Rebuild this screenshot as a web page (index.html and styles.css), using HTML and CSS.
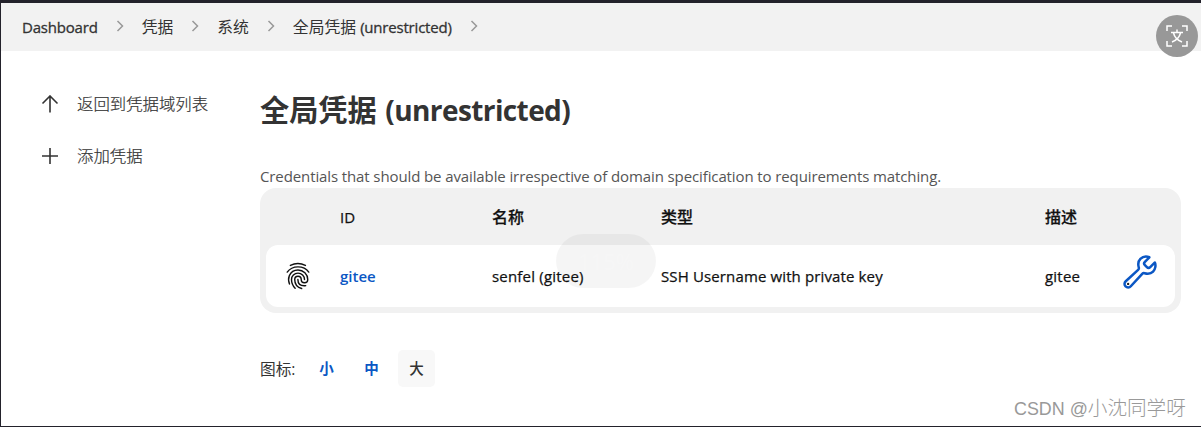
FILE: index.html
```html
<!DOCTYPE html>
<html lang="zh-CN">
  <head>
    <meta charset="UTF-8" />
    <title>全局凭据 (unrestricted)</title>
    <link rel="stylesheet" href="styles.css">
  </head>
  <body>
    <header class="breadcrumbs">
      <a class="crumb crumb-home">Dashboard</a>
      <svg class="chevron" viewBox="0 0 8 12"><path d="M1.5 1l5 5-5 5" /></svg>
      <a class="crumb">凭据</a>
      <svg class="chevron" viewBox="0 0 8 12"><path d="M1.5 1l5 5-5 5" /></svg>
      <a class="crumb">系统</a>
      <svg class="chevron" viewBox="0 0 8 12"><path d="M1.5 1l5 5-5 5" /></svg>
      <a class="crumb">全局凭据 <span class="crumb-latin">(unrestricted)</span></a>
      <svg class="chevron" viewBox="0 0 8 12"><path d="M1.5 1l5 5-5 5" /></svg>
    </header>

    <div class="page">
      <nav class="side-panel">
        <a class="task">
          <svg class="task-icon" viewBox="0 0 18 18"><path d="M1.5 8.5L9 1l7.500 7.500M9 1v16.500" /></svg>
          <span class="task-text">返回到凭据域列表</span>
        </a>
        <a class="task">
          <svg class="task-icon" viewBox="0 0 18 18"><path d="M9 1v16M1 9h16" /></svg>
          <span class="task-text">添加凭据</span>
        </a>
      </nav>

      <main class="main-panel">
        <h1>全局凭据 <span class="title-latin">(unrestricted)</span></h1>
        <p class="description">Credentials that should be available irrespective of domain specification to requirements matching.</p>

        <div class="table">
          <div class="row table-head">
            <span></span>
            <span>ID</span>
            <span class="cjk">名称</span>
            <span class="cjk">类型</span>
            <span class="cjk">描述</span>
            <span></span>
          </div>
          <div class="row table-row">
            <svg class="fingerprint" viewBox="0 0 512 512">
              <path d="M117 62Q256-8 391 63" />
              <path d="M59 185C150 57 361 57 453 184" />
              <path d="M204 480C170 445 137 400 137 320C137 255 190 203 256 203S375 255 375 320" />
              <path d="M254 320C254 395 300 435 370 435Q385 435 397 432" />
              <path d="M323 484C250 465 196 405 196 320C196 288 222 261 256 261S315 288 315 320S341 379 375 379S434 352 434 320C434 230 355 145 256 145C185 145 125 185 97 250C75 305 85 360 100 402" />
            </svg>
            <a class="link">gitee</a>
            <span class="name">senfel (gitee)</span>
            <span class="kind">SSH Username with private key</span>
            <span class="name">gitee</span>
            <svg class="wrench" viewBox="0 0 512 512">
              <path d="M393.870 190a32.100 32.100 0 0 1-45.250 0l-26.570-26.570a32.090 32.090 0 0 1 0-45.260L382.190 58a1 1 0 0 0-.3-1.640c-38.820-16.640-89.150-8.160-121.110 23.570-30.580 30.350-32.320 76-21.120 115.840a31.930 31.930 0 0 1-9.060 32.080L64 380a48.170 48.170 0 1 0 68 68l153.860-167a31.930 31.930 0 0 1 31.600-9.130c39.540 10.590 84.540 8.600 114.720-21.190 32.490-32 39.500-88.560 23.750-120.930a1 1 0 0 0-1.600-.26z" />
              <circle cx="96" cy="416" r="16" />
            </svg>
          </div>
          <div class="zoom-toast">115%</div>
        </div>

        <div class="icon-size">
          <span class="icon-size-label">图标:</span>
          <a class="size">小</a>
          <a class="size">中</a>
          <span class="size size-active">大</span>
        </div>
      </main>
    </div>

    <div class="translate">
      <svg viewBox="0 0 22 22">
        <path d="M1 6V1h5M16 1h5v5M21 16v5h-5M6 21H1v-5" />
        <path d="M11 4.500v2.500M5 7.500h12M7.500 8c1 4 4.500 7.500 8.500 9M14.500 8c-1 4-4.500 7.500-8.500 9" />
      </svg>
    </div>
    <div class="watermark"><span class="watermark-latin">CSDN @</span>小沈同学呀</div>
  </body>
</html>
```
FILE: styles.css
```css
* {
  box-sizing: border-box;
}

body {
  margin: 0;
  height: 427px;
  overflow: hidden;
  position: relative;
  border: solid #23222b;
  border-width: 3px 0 1px 1px;
  background: #fff;
  color: #333;
  font-family: "Open Sans", "Noto Sans CJK SC", sans-serif;
  font-size: 15px;
}

svg {
  fill: none;
  stroke: currentColor;
  flex: none;
}

.breadcrumbs {
  display: flex;
  align-items: center;
  height: 48px;
  padding-left: 21px;
  background: #f2f2f2;
}

.crumb {
  font-size: 15.8px;
  line-height: 22px;
  padding-bottom: 1px;
  white-space: nowrap;
}

.crumb-home {
  font-size: 15px;
  letter-spacing: -0.2px;
  -webkit-text-stroke: 0.3px;
}

.crumb-latin {
  font-size: 15px;
  letter-spacing: -0.2px;
  -webkit-text-stroke: 0.3px;
}

.chevron {
  width: 8px;
  height: 12px;
  margin: 0 18px 2px 18px;
  color: #999;
  stroke-width: 1.5;
}

.page {
  display: flex;
}

.side-panel {
  width: 259px;
  padding: 27px 0 0 40px;
}

.task {
  display: flex;
  align-items: center;
  gap: 18px;
  height: 52px;
  font-size: 16.4px;
}

.task-icon {
  width: 18px;
  height: 18px;
  stroke-width: 1.6;
}

.task-text {
  padding-bottom: 2px;
  font-weight: 300;
  -webkit-text-stroke: 0.2px;
}

.main-panel {
  width: 921px;
}

h1 {
  margin: 37px 0 0;
  font-size: 29.2px;
  line-height: 44px;
  font-weight: 700;
  white-space: nowrap;
}

.title-latin {
  margin-left: 1px;
  font-size: 28px;
  letter-spacing: -0.6px;
}

.description {
  margin: 33px 0 0;
  color: #555;
  line-height: 22px;
  height: 23px;
  letter-spacing: -0.11px;
  white-space: nowrap;
}

.table {
  position: relative;
  height: 125px;
  padding: 0 6px 6px;
  border-radius: 16px;
  background: #f1f1f1;
  color: #111;
  -webkit-text-stroke: 0.25px;
}

.row {
  display: grid;
  grid-template-columns: 74px 152px 169px 384px 78px 1fr;
  align-items: center;
}

.table-head {
  height: 57px;
}

.cjk {
  padding-bottom: 2px;
  font-size: 16px;
  font-weight: 500;
}

.table-row {
  height: 62px;
  border-radius: 12px;
  background: #fff;
}

.fingerprint {
  width: 28px;
  height: 28px;
  margin-left: 18px;
  stroke-width: 26;
  stroke-linecap: round;
}

.link {
  color: #0b57c4;
  font-weight: 600;
  -webkit-text-stroke: 0;
}

.name {
  letter-spacing: 0.2px;
}

.kind {
  letter-spacing: 0.13px;
}

.wrench {
  width: 38px;
  height: 38px;
  margin: -8px 0 0 -2px;
  color: #0b57c4;
  stroke-width: 34;
  stroke-linecap: round;
}

.wrench circle {
  fill: #222;
  stroke: none;
}

/* browser zoom hint, almost faded out */
.zoom-toast {
  position: absolute;
  left: 296px;
  top: 46px;
  width: 100px;
  height: 54px;
  border-radius: 27px;
  background: rgba(0, 0, 0, 0.04);
  color: rgba(255, 255, 255, 0.2);
  font-size: 22px;
  line-height: 54px;
  text-align: center;
}

.icon-size {
  display: flex;
  align-items: center;
  margin-top: 37px;
}

.icon-size-label {
  width: 48px;
  font-size: 15.7px;
  line-height: 22px;
}

.size {
  width: 37px;
  height: 37px;
  margin-right: 8px;
  border-radius: 5px;
  color: #0b57c4;
  font-size: 14.5px;
  font-weight: 700;
  line-height: 37px;
  text-align: center;
}

.size-active {
  background: #f8f8f8;
  color: #333;
  font-weight: 500;
}

.translate {
  position: absolute;
  left: 1155px;
  top: 12px;
  width: 42px;
  height: 42px;
  padding: 10px;
  border-radius: 50%;
  background: #989898;
  color: #fff;
}

.translate svg {
  display: block;
  width: 22px;
  height: 22px;
  stroke-width: 1.5;
}

.watermark {
  position: absolute;
  left: 1013px;
  top: 391px;
  color: #999;
  font-family: "Liberation Sans", "Noto Sans CJK SC", sans-serif;
  font-size: 19.6px;
  font-weight: 300;
  line-height: 28px;
  white-space: nowrap;
}

.watermark-latin {
  font-size: 17.9px;
}
```
